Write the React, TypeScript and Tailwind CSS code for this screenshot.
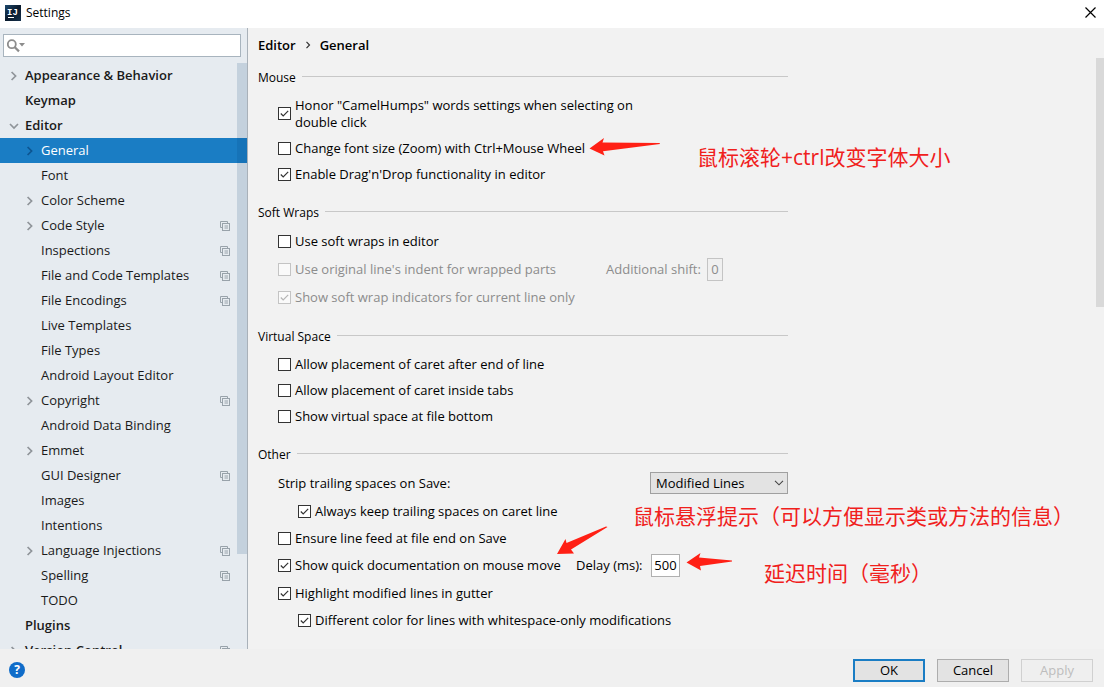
import { useState } from "react";
import type { ReactNode } from "react";

type TreeItem = {
  label: string;
  level: 0 | 1;
  arrow?: "right" | "down";
  project?: boolean;
};

const TREE: TreeItem[] = [
  { label: "Appearance & Behavior", level: 0, arrow: "right" },
  { label: "Keymap", level: 0 },
  { label: "Editor", level: 0, arrow: "down" },
  { label: "General", level: 1, arrow: "right" },
  { label: "Font", level: 1 },
  { label: "Color Scheme", level: 1, arrow: "right" },
  { label: "Code Style", level: 1, arrow: "right", project: true },
  { label: "Inspections", level: 1, project: true },
  { label: "File and Code Templates", level: 1, project: true },
  { label: "File Encodings", level: 1, project: true },
  { label: "Live Templates", level: 1 },
  { label: "File Types", level: 1 },
  { label: "Android Layout Editor", level: 1 },
  { label: "Copyright", level: 1, arrow: "right", project: true },
  { label: "Android Data Binding", level: 1 },
  { label: "Emmet", level: 1, arrow: "right" },
  { label: "GUI Designer", level: 1, project: true },
  { label: "Images", level: 1 },
  { label: "Intentions", level: 1 },
  { label: "Language Injections", level: 1, arrow: "right", project: true },
  { label: "Spelling", level: 1, project: true },
  { label: "TODO", level: 1 },
  { label: "Plugins", level: 0 },
  { label: "Version Control", level: 0, arrow: "right", project: true },
];

function Chevron({ dir, selected }: { dir: "right" | "down"; selected?: boolean }) {
  return (
    <svg
      width="10"
      height="10"
      viewBox="0 0 10 10"
      fill="none"
      stroke={selected ? "#0d5591" : "#8f9499"}
      strokeWidth="1.7"
    >
      {dir === "right" ? <path d="M2.6 1 L6.6 5 L2.6 9" /> : <path d="M1 3 L5 7 L9 3" />}
    </svg>
  );
}

// small "project level" marker on the right of a tree row
function ProjectIcon() {
  return (
    <svg width="10" height="10" viewBox="0 0 10 10" fill="none" stroke="#98a2aa">
      <path d="M2 6.5 H0.5 V0.5 H7.5 V2" />
      <rect x="2.5" y="2.5" width="7" height="7" />
      <path d="M4.5 5 H8 M4.5 7 H8" />
    </svg>
  );
}

function TreeRow({
  item,
  selected,
  onSelect,
}: {
  item: TreeItem;
  selected: boolean;
  onSelect: () => void;
}) {
  return (
    <button
      type="button"
      onClick={onSelect}
      className={`flex h-[25px] w-full shrink-0 items-center gap-[6px] pr-[17px] text-left ${
        item.level === 0 ? "pl-[9px] font-semibold" : "pl-[25px]"
      } ${selected ? "bg-[#1a7dc4] text-white" : "text-[#1a1a1a]"}`}
    >
      <span className="w-[10px] shrink-0">
        {item.arrow && <Chevron dir={item.arrow} selected={selected} />}
      </span>
      <span className="flex-1 pb-px whitespace-nowrap">{item.label}</span>
      {item.project && <ProjectIcon />}
    </button>
  );
}

function Section({ title, children }: { title: string; children: ReactNode }) {
  return (
    <section>
      <div className="flex h-7 items-center gap-[6px]">
        <h2 className="text-xs">{title}</h2>
        <div className="mb-1 h-px flex-1 bg-[#c8c8c8]" />
      </div>
      <div className="pl-5">{children}</div>
    </section>
  );
}

function Check({
  label,
  checked = false,
  disabled = false,
}: {
  label: string;
  checked?: boolean;
  disabled?: boolean;
}) {
  const [on, setOn] = useState(checked);

  return (
    <label className={`flex items-center gap-1 ${disabled ? "text-[#8c8c8c]" : ""}`}>
      <span className="grid shrink-0 place-items-center">
        <input
          type="checkbox"
          checked={on}
          disabled={disabled}
          onChange={() => setOn(!on)}
          className={`col-start-1 row-start-1 size-[13px] appearance-none border ${
            disabled ? "border-[#c4c4c4] bg-[#fafafa]" : "border-[#333333] bg-white"
          }`}
        />
        {on && (
          <svg
            width="13"
            height="13"
            viewBox="0 0 13 13"
            fill="none"
            stroke={disabled ? "#b5b5b5" : "#333333"}
            strokeWidth="1.2"
            className="pointer-events-none col-start-1 row-start-1"
          >
            <path d="M2.8 6.5 L5.2 9 L10.2 3.8" />
          </svg>
        )}
      </span>
      <span>{label}</span>
    </label>
  );
}

function Note({ className, children }: { className: string; children: ReactNode }) {
  return (
    <p className={`absolute text-[21px] leading-7 whitespace-nowrap text-[#f0201c] ${className}`}>
      {children}
    </p>
  );
}

export default function App() {
  const [selected, setSelected] = useState("General");

  return (
    <div className="flex h-screen flex-col overflow-hidden bg-[#f0f0f0] font-['Open_Sans','Noto_Sans_CJK_SC',sans-serif] text-[13px] leading-[17px] text-black">
      {/* title bar */}
      <header className="flex h-7 shrink-0 items-center gap-[5px] bg-white pr-2 pb-[3px] pl-[5px]">
        <svg width="16" height="16" viewBox="0 0 16 16">
          <defs>
            <linearGradient id="ij" x1="0" y1="0" x2="1" y2="1">
              <stop offset="0" stopColor="#1d4a6e" />
              <stop offset="0.5" stopColor="#0a1a2c" />
              <stop offset="1" stopColor="#14304c" />
            </linearGradient>
          </defs>
          <rect width="16" height="16" fill="url(#ij)" />
          <text x="2" y="9.5" fill="#fff" fontSize="9" fontWeight="bold" fontFamily="Liberation Mono">
            IJ
          </text>
          <rect x="3" y="12" width="6" height="1" fill="#fff" />
        </svg>
        <h1 className="flex-1 text-xs">Settings</h1>
        <button type="button" aria-label="Close">
          <svg width="11" height="11" viewBox="0 0 11 11" stroke="#000" strokeWidth="1.2">
            <path d="M0.5 0.5 L10.5 10.5 M10.5 0.5 L0.5 10.5" />
          </svg>
        </button>
      </header>

      <div className="flex min-h-0 flex-1">
        {/* settings tree */}
        <aside className="relative flex w-[248px] shrink-0 flex-col overflow-hidden border-r border-[#a9b1b9] bg-[#e6ebf0]">
          <div className="shrink-0 pt-[6px] pr-[6px] pb-[6px] pl-[3px]">
            <label className="flex h-[23px] items-center border border-[#a8b4be] bg-white pl-[3px]">
              <svg width="18" height="14" viewBox="0 0 18 14" fill="none" stroke="#8c8c8c">
                <circle cx="4.8" cy="5.2" r="4" strokeWidth="1.8" />
                <path d="M7.8 8.2 L12 12.4" strokeWidth="2.2" />
                <path d="M12 4 H18 L15 7.4 Z" fill="#8c8c8c" stroke="none" />
              </svg>
              <input type="text" aria-label="Search settings" className="h-full min-w-0 flex-1 px-1 outline-none" />
            </label>
          </div>
          <nav className="flex min-h-0 flex-1 flex-col overflow-hidden">
            {TREE.map((item) => (
              <TreeRow
                key={item.label}
                item={item}
                selected={item.label === selected}
                onSelect={() => setSelected(item.label)}
              />
            ))}
          </nav>
          <div className="pointer-events-none absolute top-[35px] right-0 h-[491px] w-[10px] bg-[#003f70]/15" />
        </aside>

        {/* editor / general */}
        <main className="relative min-w-0 flex-1 overflow-hidden bg-[#f2f2f2] pl-[10px]">
          <div className="flex h-9 items-center gap-[9px] pb-[2px] font-semibold">
            <span>Editor</span>
            <svg width="6" height="8" viewBox="0 0 6 8" fill="none" stroke="#333" strokeWidth="1.2">
              <path d="M1.5 0.8 L4.5 4 L1.5 7.2" />
            </svg>
            <span>General</span>
          </div>

          <div className="flex max-w-[530px] flex-col gap-3">
            <Section title="Mouse">
              <div className="flex h-[43px] max-w-[360px] items-center">
                <Check label={'Honor "CamelHumps" words settings when selecting on double click'} checked />
              </div>
              <div className="flex h-[26px] items-center">
                <Check label="Change font size (Zoom) with Ctrl+Mouse Wheel" />
              </div>
              <div className="flex h-[26px] items-center">
                <Check label="Enable Drag'n'Drop functionality in editor" checked />
              </div>
            </Section>

            <Section title="Soft Wraps">
              <div className="flex h-7 items-center">
                <Check label="Use soft wraps in editor" />
              </div>
              <div className="flex h-7 items-center">
                <div className="w-[328px]">
                  <Check label="Use original line's indent for wrapped parts" disabled />
                </div>
                <label htmlFor="shift" className="w-[101px] text-[#8c8c8c]">
                  Additional shift:
                </label>
                <input
                  id="shift"
                  type="text"
                  defaultValue="0"
                  disabled
                  className="h-[23px] w-4 border border-[#c4c4c4] bg-[#f0f0f0] text-center text-[#8c8c8c]"
                />
              </div>
              <div className="flex h-7 items-center">
                <Check label="Show soft wrap indicators for current line only" checked disabled />
              </div>
            </Section>

            <Section title="Virtual Space">
              <div className="flex h-[26px] items-center">
                <Check label="Allow placement of caret after end of line" />
              </div>
              <div className="flex h-[26px] items-center">
                <Check label="Allow placement of caret inside tabs" />
              </div>
              <div className="flex h-[26px] items-center">
                <Check label="Show virtual space at file bottom" />
              </div>
            </Section>

            <Section title="Other">
              <div className="flex h-7 items-center justify-between">
                <label htmlFor="strip">Strip trailing spaces on Save:</label>
                <div className="grid w-[138px] items-center">
                  <select
                    id="strip"
                    className="col-start-1 row-start-1 h-[22px] appearance-none border border-[#a0a0a0] bg-[#e3e3e3] pl-[5px]"
                  >
                    <option>Modified Lines</option>
                    <option>All</option>
                    <option>None</option>
                  </select>
                  <svg
                    width="10"
                    height="6"
                    viewBox="0 0 10 6"
                    fill="none"
                    stroke="#444"
                    strokeWidth="1.1"
                    className="pointer-events-none col-start-1 row-start-1 mr-1 justify-self-end"
                  >
                    <path d="M1 0.8 L5 4.8 L9 0.8" />
                  </svg>
                </div>
              </div>
              <div className="flex h-7 items-center pl-5">
                <Check label="Always keep trailing spaces on caret line" checked />
              </div>
              <div className="flex h-[26px] items-center">
                <Check label="Ensure line feed at file end on Save" />
              </div>
              <div className="flex h-7 items-center">
                <div className="w-[298px]">
                  <Check label="Show quick documentation on mouse move" checked />
                </div>
                <label htmlFor="delay" className="w-[75px]">
                  Delay (ms):
                </label>
                <input
                  id="delay"
                  type="text"
                  defaultValue="500"
                  className="h-[23px] w-[29px] border border-[#b0b0b0] bg-white text-center"
                />
              </div>
              <div className="flex h-7 items-center">
                <Check label="Highlight modified lines in gutter" checked />
              </div>
              <div className="flex h-[26px] items-center pl-5">
                <Check label="Different color for lines with whitespace-only modifications" checked />
              </div>
            </Section>
          </div>

          {/* hand-made notes lying over the form */}
          <Note className="top-[115px] left-[449px]">鼠标滚轮+ctrl改变字体大小</Note>
          <Note className="top-[474px] left-[385px]">鼠标悬浮提示（可以方便显示类或方法的信息）</Note>
          <Note className="top-[531px] left-[516px]">延迟时间（毫秒）</Note>
          <svg width="71" height="18" viewBox="0 0 71 18" fill="#ff2015" className="absolute top-[110px] left-[341px]">
            <path d="M0.5 10.5 L15 0 L13.5 4.4 L70.5 5 L71 6 L14 13.2 L15.5 17.5 Z" />
          </svg>
          <svg width="51" height="29" viewBox="0 0 51 29" fill="#ff2015" className="absolute top-[498px] left-[309px]">
            <path d="M0 28 L8.5 13 L9.5 17 L49 0.5 L50.5 1 L14 23.5 L17 27.5 Z" />
          </svg>
          <svg width="47" height="18" viewBox="0 0 47 18" fill="#ff2015" className="absolute top-[525px] left-[438px]">
            <path d="M0.5 9.5 L14.5 0 L13 4.5 L46 7.5 L46 8.5 L14 13 L15 17.5 Z" />
          </svg>

          <div className="absolute top-[30px] right-0 h-[249px] w-2 bg-[#d9d9d9]" />
        </main>
      </div>

      {/* footer */}
      <footer className="flex h-[38px] shrink-0 items-center gap-3 pt-1 pr-[11px] pl-[9px]">
        <button
          type="button"
          aria-label="Help"
          className="size-4 rounded-full bg-[#0f6cc9] text-xs leading-4 font-bold text-white"
        >
          ?
        </button>
        <div className="flex-1" />
        <button type="button" className="h-[23px] w-[72px] border-2 border-[#1a7dc4] bg-[#e3e3e3]">
          OK
        </button>
        <button type="button" className="h-[23px] w-[72px] border border-[#adadad] bg-[#e3e3e3]">
          Cancel
        </button>
        <button type="button" disabled className="h-[23px] w-[72px] border border-[#d0d0d0] bg-[#efefef] text-[#bdbdbd]">
          Apply
        </button>
      </footer>
    </div>
  );
}
